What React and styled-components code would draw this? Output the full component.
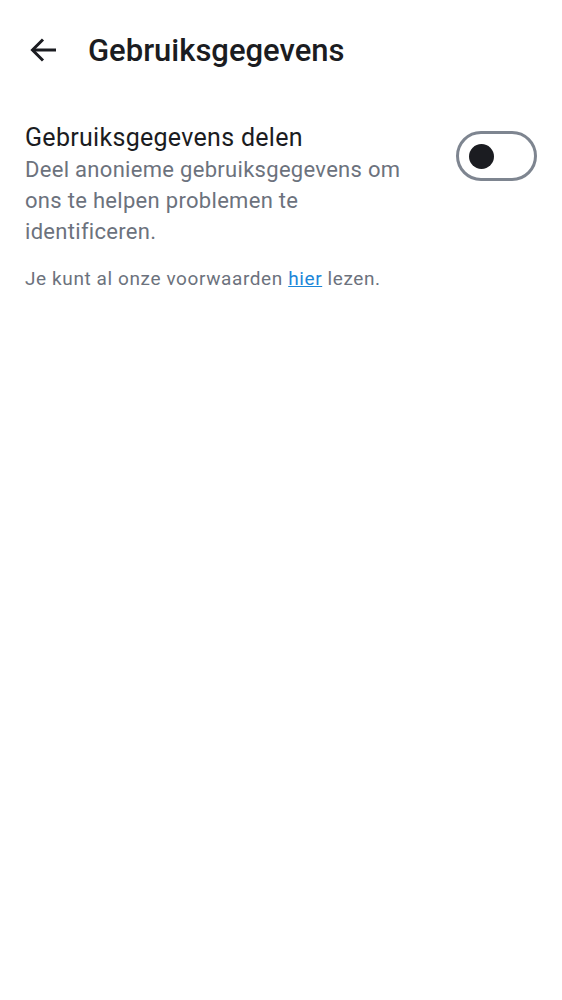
import React from 'react';
import styled, { createGlobalStyle } from 'styled-components';

const GlobalStyle = createGlobalStyle`
  body {
    margin: 0;
    background: #ffffff;
    font-family: Roboto, "Noto Sans", sans-serif;
  }
`;

const Page = styled.div`
  min-height: 1000px;
  background: #ffffff;
`;

const Header = styled.header`
  display: flex;
  align-items: center;
  height: 100px;
  padding: 0 0 0 30px;
  gap: 31px;
`;

const BackButton = styled.button`
  display: flex;
  align-items: center;
  justify-content: center;
  padding: 0;
  border: none;
  background: none;
  width: 27px;
  height: 24px;
  color: #1b1c21;
`;

const Title = styled.h1`
  margin: 0;
  font-size: 31px;
  font-weight: 500;
  color: #1b1c21;
`;

const Content = styled.main`
  padding: 21px 25px 0 25px;
`;

const SettingRow = styled.div`
  display: flex;
  justify-content: space-between;
  align-items: flex-start;
  gap: 20px;
`;

const SettingText = styled.div`
  display: flex;
  flex-direction: column;
  max-width: 400px;
`;

const SettingLabel = styled.div`
  font-size: 25px;
  line-height: 33px;
  letter-spacing: 0.3px;
  color: #1b1c21;
`;

const SettingDescription = styled.div`
  font-size: 22px;
  line-height: 31px;
  letter-spacing: 0.3px;
  color: #6c727d;
`;

const Track = styled.div`
  box-sizing: border-box;
  flex-shrink: 0;
  width: 81px;
  height: 50px;
  margin-top: 10px;
  border: 3px solid #7e8590;
  border-radius: 25px;
  display: flex;
  align-items: center;
  padding: 0 10px;
  justify-content: ${props => (props.on ? 'flex-end' : 'flex-start')};
`;

const Thumb = styled.div`
  width: 25px;
  height: 25px;
  border-radius: 50%;
  background: #1b1c21;
`;

const Footnote = styled.p`
  margin: 20px 0 0 0;
  font-size: 19px;
  letter-spacing: 0.6px;
  color: #6c727d;
`;

const Link = styled.a`
  color: #1c86d9;
  text-decoration: underline;
`;

function ArrowBack() {
  return (
    <svg width="27" height="24" viewBox="0 0 27 24" fill="none" stroke="currentColor" strokeWidth="3">
      <path d="M26 12H2.5" />
      <path d="M13 1.5L2.5 12L13 22.5" />
    </svg>
  );
}

export default function App() {
  return (
    <Page>
      <GlobalStyle />
      <Header>
        <BackButton aria-label="Terug">
          <ArrowBack />
        </BackButton>
        <Title>Gebruiksgegevens</Title>
      </Header>
      <Content>
        <SettingRow>
          <SettingText>
            <SettingLabel>Gebruiksgegevens delen</SettingLabel>
            <SettingDescription>
              Deel anonieme gebruiksgegevens om ons te helpen problemen te identificeren.
            </SettingDescription>
          </SettingText>
          <Track on={false}>
            <Thumb />
          </Track>
        </SettingRow>
        <Footnote>
          Je kunt al onze voorwaarden <Link href="#">hier</Link> lezen.
        </Footnote>
      </Content>
    </Page>
  );
}
